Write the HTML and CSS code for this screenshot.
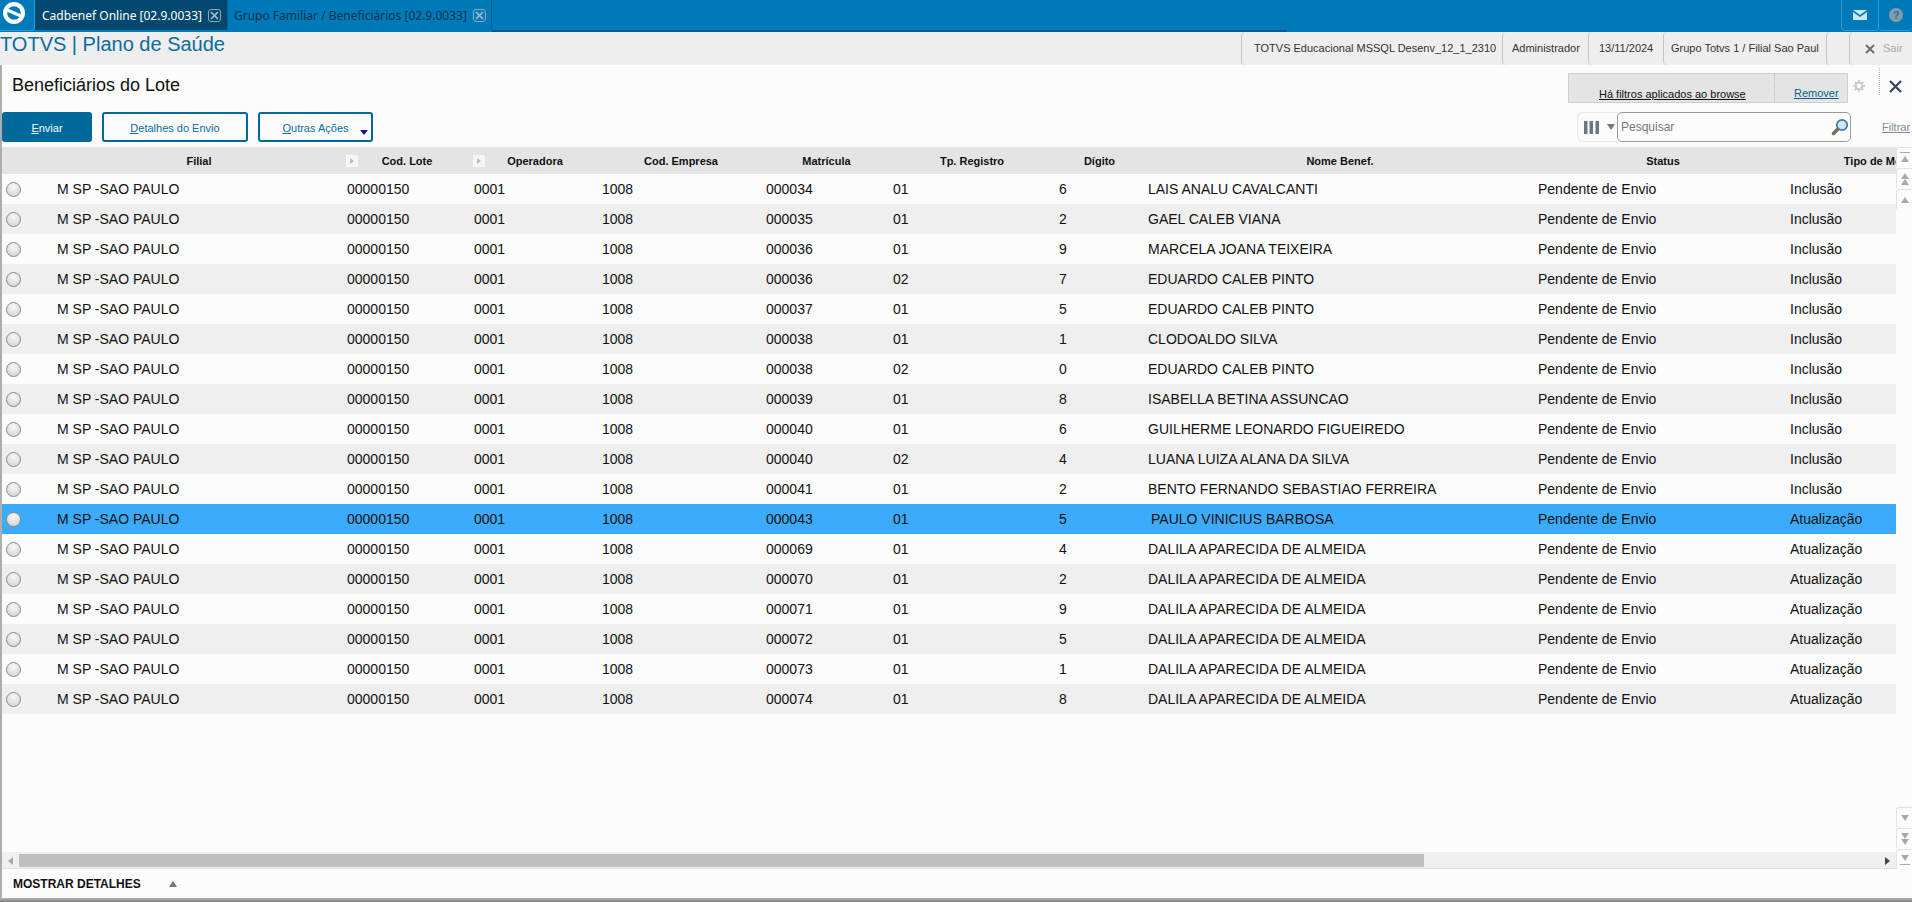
FILE: index.html
```html
<!DOCTYPE html>
<html lang="pt-BR">
<head>
<meta charset="utf-8">
<title>Beneficiários do Lote</title>
<link rel="stylesheet" href="styles.css">
</head>
<body>
<div class="topbar">
  <div class="logo"><svg width="30" height="28" viewBox="0 0 30 28"><circle cx="14" cy="13" r="11" fill="#fff"/><circle cx="14" cy="13" r="6.800" fill="#0079b8"/><path d="M7 10 21 16" stroke="#fff" stroke-width="3.200"/></svg></div>
  <div class="tab active"><span>Cadbenef Online [02.9.0033]</span><i class="tabx"><svg width="9" height="9" viewBox="0 0 9 9"><path d="M1 1l7 7M8 1 1 8" stroke="#a8bfcc" stroke-width="1.600"/></svg></i></div>
  <div class="tab second"><span>Grupo Familiar / Beneficiários [02.9.0033]</span><i class="tabx"><svg width="9" height="9" viewBox="0 0 9 9"><path d="M1 1l7 7M8 1 1 8" stroke="#a8bfcc" stroke-width="1.600"/></svg></i></div>
  <div class="topfill"></div>
  <div class="topicon"><svg width="14" height="10" viewBox="0 0 14 10"><path d="M0 0h14L7 5z M0 2l7 5 7-5v8H0z" fill="#cfe6f3"/></svg></div>
  <div class="topicon"><svg width="14" height="14" viewBox="0 0 14 14"><circle cx="7" cy="7" r="7" fill="#8a9aa5"/><text x="7" y="11" text-anchor="middle" class="q">?</text></svg></div>
</div>
<div class="subbar">
  <div class="brand">TOTVS | Plano de Saúde</div>
  <div class="info">
    <div class="info-cell c1">TOTVS Educacional MSSQL Desenv_12_1_2310</div>
    <div class="info-cell c2">Administrador</div>
    <div class="info-cell c3">13/11/2024</div>
    <div class="info-cell c4">Grupo Totvs 1 / Filial Sao Paul</div>
    <div class="info-cell c5"></div>
    <div class="info-cell c6"><svg width="10" height="10" viewBox="0 0 10 10"><path d="M1 1l8 8M9 1 1 9" stroke="#66707a" stroke-width="2"/></svg><span>Sair</span></div>
  </div>
</div>
<div class="main">
  <div class="titlerow">
    <h1 class="title">Beneficiários do Lote</h1>
    <div class="filterbox"><div class="fcell"><a class="f1">Há filtros aplicados ao browse</a></div><a class="f2">Remover</a></div>
    <svg class="gear" width="12" height="12" viewBox="0 0 16 16"><circle cx="8" cy="8" r="4.500" fill="none" stroke="#c8c8c8" stroke-width="2.500"/><path d="M8 0v3.500M8 12.500V16M0 8h3.500M12.500 8H16M2.300 2.300l2.500 2.500M11.200 11.200l2.500 2.500M13.700 2.300l-2.500 2.500M4.800 11.200l-2.500 2.500" stroke="#c8c8c8" stroke-width="2.200"/></svg>
    <div class="dots"></div>
    <svg class="close" width="13" height="13" viewBox="0 0 13 13"><path d="M1 1l11 11M12 1 1 12" stroke="#34465a" stroke-width="2.200"/></svg>
  </div>
  <div class="toolbar">
    <button class="btn primary"><u>E</u>nviar</button>
    <button class="btn d"><u>D</u>etalhes do Envio</button>
    <button class="btn o"><u>O</u>utras Ações<i class="caret"></i></button>
    <div class="colpick"><svg width="15" height="13" viewBox="0 0 15 13"><path d="M0 0h3.500v13H0zM5.500 0H9v13H5.500zM11.500 0H15v13h-3.500z" fill="#6c7684"/></svg><i class="tri"></i></div>
    <div class="search"><span>Pesquisar</span><svg width="18" height="18" viewBox="0 0 18 18"><path d="M7 11 2.500 15.500" stroke="#7a6a52" stroke-width="3.500" stroke-linecap="round"/><circle cx="11" cy="7" r="5.200" fill="#cfe8f5" stroke="#3d7fa8" stroke-width="1.800"/></svg></div>
    <a class="filtrar">Filtrar</a>
  </div>
  <div class="body">
    <div class="tablewrap">
      <div class="table" id="table">
        <div class="row head">
          <div></div><div class="hc">Filial</div>
          <div class="hc s"><i class="sort"></i>Cod. Lote</div>
          <div class="hc s o2"><i class="sort"></i>Operadora</div>
          <div class="hc">Cod. Empresa</div><div class="hc">Matrícula</div><div class="hc n">Tp. Registro</div><div class="hc n">Dígito</div><div class="hc">Nome Benef.</div><div class="hc st">Status</div><div class="hc">Tipo de Movimentação</div>
        </div>
        <div class="row"><div class="rc"><i class="radio"></i></div><div>M SP -SAO PAULO</div><div>00000150</div><div>0001</div><div>1008</div><div>000034</div><div>01</div><div>6</div><div>LAIS ANALU CAVALCANTI</div><div>Pendente de Envio</div><div>Inclusão</div></div>
        <div class="row"><div class="rc"><i class="radio"></i></div><div>M SP -SAO PAULO</div><div>00000150</div><div>0001</div><div>1008</div><div>000035</div><div>01</div><div>2</div><div>GAEL CALEB VIANA</div><div>Pendente de Envio</div><div>Inclusão</div></div>
        <div class="row"><div class="rc"><i class="radio"></i></div><div>M SP -SAO PAULO</div><div>00000150</div><div>0001</div><div>1008</div><div>000036</div><div>01</div><div>9</div><div>MARCELA JOANA TEIXEIRA</div><div>Pendente de Envio</div><div>Inclusão</div></div>
        <div class="row"><div class="rc"><i class="radio"></i></div><div>M SP -SAO PAULO</div><div>00000150</div><div>0001</div><div>1008</div><div>000036</div><div>02</div><div>7</div><div>EDUARDO CALEB PINTO</div><div>Pendente de Envio</div><div>Inclusão</div></div>
        <div class="row"><div class="rc"><i class="radio"></i></div><div>M SP -SAO PAULO</div><div>00000150</div><div>0001</div><div>1008</div><div>000037</div><div>01</div><div>5</div><div>EDUARDO CALEB PINTO</div><div>Pendente de Envio</div><div>Inclusão</div></div>
        <div class="row"><div class="rc"><i class="radio"></i></div><div>M SP -SAO PAULO</div><div>00000150</div><div>0001</div><div>1008</div><div>000038</div><div>01</div><div>1</div><div>CLODOALDO SILVA</div><div>Pendente de Envio</div><div>Inclusão</div></div>
        <div class="row"><div class="rc"><i class="radio"></i></div><div>M SP -SAO PAULO</div><div>00000150</div><div>0001</div><div>1008</div><div>000038</div><div>02</div><div>0</div><div>EDUARDO CALEB PINTO</div><div>Pendente de Envio</div><div>Inclusão</div></div>
        <div class="row"><div class="rc"><i class="radio"></i></div><div>M SP -SAO PAULO</div><div>00000150</div><div>0001</div><div>1008</div><div>000039</div><div>01</div><div>8</div><div>ISABELLA BETINA ASSUNCAO</div><div>Pendente de Envio</div><div>Inclusão</div></div>
        <div class="row"><div class="rc"><i class="radio"></i></div><div>M SP -SAO PAULO</div><div>00000150</div><div>0001</div><div>1008</div><div>000040</div><div>01</div><div>6</div><div>GUILHERME LEONARDO FIGUEIREDO</div><div>Pendente de Envio</div><div>Inclusão</div></div>
        <div class="row"><div class="rc"><i class="radio"></i></div><div>M SP -SAO PAULO</div><div>00000150</div><div>0001</div><div>1008</div><div>000040</div><div>02</div><div>4</div><div>LUANA LUIZA ALANA DA SILVA</div><div>Pendente de Envio</div><div>Inclusão</div></div>
        <div class="row"><div class="rc"><i class="radio"></i></div><div>M SP -SAO PAULO</div><div>00000150</div><div>0001</div><div>1008</div><div>000041</div><div>01</div><div>2</div><div>BENTO FERNANDO SEBASTIAO FERREIRA</div><div>Pendente de Envio</div><div>Inclusão</div></div>
        <div class="row sel"><div class="rc"><i class="radio"></i></div><div>M SP -SAO PAULO</div><div>00000150</div><div>0001</div><div>1008</div><div>000043</div><div>01</div><div>5</div><div class="lead">PAULO VINICIUS BARBOSA</div><div>Pendente de Envio</div><div>Atualização</div></div>
        <div class="row"><div class="rc"><i class="radio"></i></div><div>M SP -SAO PAULO</div><div>00000150</div><div>0001</div><div>1008</div><div>000069</div><div>01</div><div>4</div><div>DALILA APARECIDA DE ALMEIDA</div><div>Pendente de Envio</div><div>Atualização</div></div>
        <div class="row"><div class="rc"><i class="radio"></i></div><div>M SP -SAO PAULO</div><div>00000150</div><div>0001</div><div>1008</div><div>000070</div><div>01</div><div>2</div><div>DALILA APARECIDA DE ALMEIDA</div><div>Pendente de Envio</div><div>Atualização</div></div>
        <div class="row"><div class="rc"><i class="radio"></i></div><div>M SP -SAO PAULO</div><div>00000150</div><div>0001</div><div>1008</div><div>000071</div><div>01</div><div>9</div><div>DALILA APARECIDA DE ALMEIDA</div><div>Pendente de Envio</div><div>Atualização</div></div>
        <div class="row"><div class="rc"><i class="radio"></i></div><div>M SP -SAO PAULO</div><div>00000150</div><div>0001</div><div>1008</div><div>000072</div><div>01</div><div>5</div><div>DALILA APARECIDA DE ALMEIDA</div><div>Pendente de Envio</div><div>Atualização</div></div>
        <div class="row"><div class="rc"><i class="radio"></i></div><div>M SP -SAO PAULO</div><div>00000150</div><div>0001</div><div>1008</div><div>000073</div><div>01</div><div>1</div><div>DALILA APARECIDA DE ALMEIDA</div><div>Pendente de Envio</div><div>Atualização</div></div>
        <div class="row"><div class="rc"><i class="radio"></i></div><div>M SP -SAO PAULO</div><div>00000150</div><div>0001</div><div>1008</div><div>000074</div><div>01</div><div>8</div><div>DALILA APARECIDA DE ALMEIDA</div><div>Pendente de Envio</div><div>Atualização</div></div>
      </div>
      <div class="hscroll">
        <i class="al"></i>
        <div class="thumb"></div>
        <i class="ar"></i>
      </div>
    </div>
    <div class="rail">
      <div class="railgroup">
        <div class="rb"><svg width="10" height="13" viewBox="0 0 10 13"><path d="M0 1h10v1H0z M1 11h8L5 5z" fill="#a9a9a9"/></svg></div>
        <div class="rb"><svg width="10" height="14" viewBox="0 0 10 14"><path d="M1 7h8L5 1zM1 13h8L5 7z" fill="#a9a9a9"/></svg></div>
        <div class="rb"><svg width="10" height="8" viewBox="0 0 10 8"><path d="M1 7h8L5 1z" fill="#a9a9a9"/></svg></div>
      </div>
      <div class="railgroup">
        <div class="rb"><svg width="10" height="8" viewBox="0 0 10 8"><path d="M1 1h8L5 7z" fill="#a9a9a9"/></svg></div>
        <div class="rb"><svg width="10" height="14" viewBox="0 0 10 14"><path d="M1 1h8L5 7zM1 7h8L5 13z" fill="#a9a9a9"/></svg></div>
        <div class="rb"><svg width="10" height="13" viewBox="0 0 10 13"><path d="M1 2h8L5 8z M0 11h10v1H0z" fill="#a9a9a9"/></svg></div>
      </div>
    </div>
  </div>
  <div class="footer"><span>MOSTRAR DETALHES</span><i class="uptri"></i></div>
</div>
<div class="shadow"></div>
</body>
</html>
```
FILE: styles.css
```css
* { box-sizing: border-box; }
html, body { margin: 0; padding: 0; height: 902px; overflow: hidden; }
body { width: 1912px; display: flex; flex-direction: column; font-family: "Liberation Sans", Arial, sans-serif; background: #fcfcfc; color: #111; }

.topbar { height: 32px; flex: none; background: #0079b8; display: flex; }
.logo { width: 35px; height: 31px; border-right: 1px solid #2b9ad6; border-bottom: 1px solid #2b9ad6; border-radius: 0 0 4px 0; }
.logo svg { display: block; }
.tab { height: 30px; display: flex; align-items: center; justify-content: space-between; border-right: 1px solid #0a5f8c; font: 12px "Noto Sans", sans-serif; white-space: nowrap; }
.tab.active { width: 193px; padding: 0 6px 0 7px; background: #03496f; color: #fff; }
.tab.second { width: 264px; padding: 0 5px 0 6px; color: #06344e; }
.tabx { flex: none; width: 13px; height: 13px; border: 1px solid #8fa7b5; border-radius: 3px; display: flex; align-items: center; justify-content: center; }
.topfill { width: 795px; height: 32px; border-bottom: 2px solid #005a8a; }
.topicon { width: 38px; height: 31px; border: 1px solid #2b9ad6; border-top: 0; border-radius: 0 0 4px 4px; display: flex; align-items: center; justify-content: center; }
.topfill + .topicon { margin-left: 554px; }
.topicon + .topicon { width: 33px; border-right: 0; border-left: 0; }
.q { font: bold 11px "Liberation Sans", sans-serif; fill: #0079b8; }

.subbar { height: 33px; flex: none; background: #eeeeee; display: flex; justify-content: space-between; }
.brand { font-size: 20px; line-height: 25px; color: #0b6c9e; }
.info { display: flex; }
.info-cell { height: 33px; font-size: 11px; line-height: 33px; color: #333; border-left: 1px solid #c4c4c4; border-radius: 4px 0 0 4px; overflow: hidden; white-space: nowrap; }
.c1 { width: 261px; padding-left: 12px; }
.c2 { width: 86px; padding-left: 9px; }
.c3 { width: 75px; padding-left: 10px; }
.c4 { width: 163px; padding-left: 7px; }
.c5 { width: 23px; }
.c6 { width: 63px; padding-left: 15px; color: #aaa; display: flex; align-items: center; gap: 8px; }

.main { flex: 1; min-height: 0; display: flex; flex-direction: column; border-left: 2px solid #adadad; }
.titlerow { height: 47px; flex: none; display: flex; align-items: flex-start; }
.title { margin: 8px auto 0 10px; font-size: 18px; line-height: 24px; font-weight: normal; color: #111; }
.filterbox { flex: none; width: 280px; height: 30px; margin: 8px 5px 0 0; background: #e4e4e4; border: 1px solid #cfcfcf; display: flex; align-items: flex-end; font-size: 11px; line-height: 14px; white-space: nowrap; }
.fcell { width: 206px; height: 100%; padding: 13px 0 0 30px; border-right: 1px dotted #bbb; }
.f1 { color: #111; text-decoration: underline; }
.f2 { margin: 0 0 2px 19px; color: #0b5f8c; text-decoration: underline; }
.gear { flex: none; margin: 15px 0 0; }
.dots { flex: none; width: 0; height: 27px; margin: 3px 0 0 14px; border-left: 1px dotted #bbb; }
.close { flex: none; margin: 15px 10px 0 9px; }

.toolbar { height: 30px; flex: none; margin-bottom: 5px; display: flex; align-items: center; font-size: 11px; }
.btn { height: 30px; padding: 1px 0 0; background: #fcfcfc; border: 2px solid #00699c; border-radius: 3px; color: #0b6c9e; font: 11px "Liberation Sans", sans-serif; position: relative; }
.btn.primary { width: 90px; background: #00699c; color: #fff; }
.btn.d { width: 146px; margin-left: 10px; }
.btn.o { width: 115px; margin-left: 10px; }
.caret { position: absolute; right: 3px; bottom: 5px; border: 4px solid transparent; border-top: 5px solid #1a1a8c; border-bottom: 0; }
.colpick { width: 40px; height: 30px; margin-left: 1204px; border: 1px solid #e8e8e8; border-right: 0; border-radius: 6px 0 0 6px; display: flex; align-items: center; padding-left: 6px; gap: 8px; }
.tri { border: 4px solid transparent; border-top: 6px solid #6c7684; border-bottom: 0; }
.search { width: 234px; height: 30px; border: 1px solid #999; border-radius: 5px; background: #fcfcfc; display: flex; align-items: center; justify-content: space-between; padding: 0 0 0 3px; color: #777; font-size: 12px; }
.search svg { margin-right: 1px; }
.filtrar { margin-left: 31px; color: #7d8b96; text-decoration: underline; }

.body { flex: 1; min-height: 0; display: flex; }
.tablewrap { width: 1894px; display: flex; flex-direction: column; }
.table { flex: 1; min-height: 0; overflow: hidden; }
.row { height: 30px; display: grid; grid-template-columns: 50px 294px 128px 128px 164px 127px 158px 97px 390px 252px 232px; align-items: center; font-size: 14px; white-space: nowrap; width: 2020px; }
.row:nth-child(odd) { background: #efefef; }
.row > div:nth-child(2) { padding-left: 5px; }
.row > div:nth-child(3) { padding-left: 1px; }
.row > div:nth-child(8) { padding-left: 8px; }
.row.sel { background: #3dabfb; }
.row > .lead { padding-left: 3px; }
.rc { padding-left: 4px; display: flex; align-items: center; }
.radio { display: block; width: 15px; height: 15px; border-radius: 50%; border: 1px solid #8a8a8a; background: radial-gradient(circle at 50% 30%, #f8f8f8, #cfcfcf); }
.row.head, .row.head:nth-child(odd) { height: 27px; background: #e4e4e4; font-size: 11px; font-weight: bold; }
.row.head > div { padding-left: 0; }
.hc { position: relative; text-align: center; padding-right: 6px; }
.row.head > .hc:nth-child(2), .hc.n { padding-right: 0; }
.hc.st { padding-right: 2px; }
.sort { position: absolute; left: 0; top: 0; width: 12px; height: 12px; background: #f6f6f6; }
.sort::after { content: ""; position: absolute; left: 4px; top: 3px; border: 3px solid transparent; border-left: 4px solid #bbb; border-right: 0; }
.o2 .sort { left: -1px; }

.hscroll { height: 17px; flex: none; background: #f0f0f0; border-bottom: 1px solid #e2e2e2; position: relative; padding: 2px 0 1px 17px; display: flex; align-items: stretch; }
.thumb { width: 1405px; background: #bfbfbf; }
.al { position: absolute; left: 6px; top: 5px; border: 4px solid transparent; border-right: 5px solid #aaa; border-left: 0; }
.ar { position: absolute; right: 6px; top: 5px; border: 4px solid transparent; border-left: 5px solid #444; border-right: 0; }

.rail { width: 16px; flex: none; display: flex; flex-direction: column; justify-content: space-between; }
.railgroup { display: flex; flex-direction: column; gap: 1px; }
.rb { height: 20px; border: 1px solid #e2e2e2; border-right: 0; border-bottom: 0; border-radius: 3px 0 0 0; display: flex; align-items: center; justify-content: center; }

.footer { height: 29px; flex: none; display: flex; align-items: center; font-size: 12px; font-weight: bold; color: #111; padding-left: 11px; }
.uptri { margin-left: 28px; border: 4px solid transparent; border-bottom: 6px solid #6c7684; border-top: 0; }
.shadow { height: 4px; flex: none; background: linear-gradient(to bottom, #b5b5b5, #808080); }
```
